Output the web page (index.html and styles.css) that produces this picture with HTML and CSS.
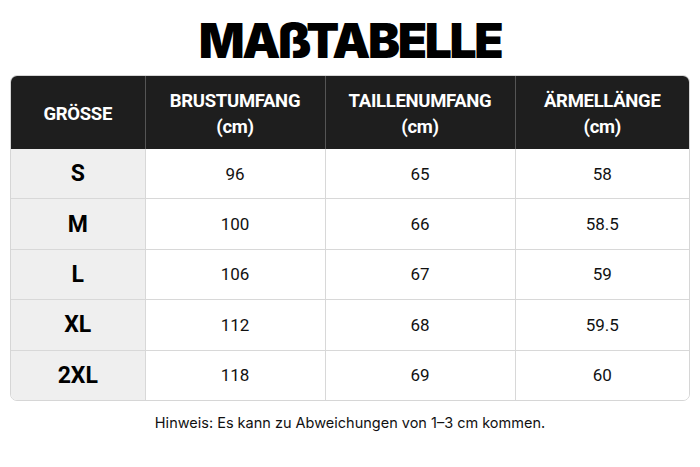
FILE: index.html
```html
<!DOCTYPE html>
<html lang="de">
<head>
<meta charset="utf-8">
<link rel="stylesheet" href="styles.css">
</head>
<body>
<main class="page">
  <h1 class="title">MAßTABELLE</h1>
  <div class="table-wrap">
    <table class="size-table">
      <thead>
        <tr>
          <th class="c1">GRÖSSE</th>
          <th class="c2">BRUSTUMFANG<br>(cm)</th>
          <th class="c3">TAILLENUMFANG<br>(cm)</th>
          <th class="c4">ÄRMELLÄNGE<br>(cm)</th>
        </tr>
      </thead>
      <tbody>
        <tr><td class="size">S</td><td>96</td><td>65</td><td>58</td></tr>
        <tr><td class="size">M</td><td>100</td><td>66</td><td>58.5</td></tr>
        <tr><td class="size">L</td><td>106</td><td>67</td><td>59</td></tr>
        <tr><td class="size">XL</td><td>112</td><td>68</td><td>59.5</td></tr>
        <tr><td class="size">2XL</td><td>118</td><td>69</td><td>60</td></tr>
      </tbody>
    </table>
  </div>
  <p class="note">Hinweis: Es kann zu Abweichungen von 1–3 cm kommen.</p>
</main>
</body>
</html>
```
FILE: styles.css
```css
html, body {
  margin: 0;
  padding: 0;
  background: #ffffff;
}
.page {
  width: 700px;
  height: 467px;
  display: flex;
  flex-direction: column;
  align-items: center;
}
.title {
  margin: 12px 0 0 0;
  height: 63px;
  font-family: Inter, "Noto Sans", sans-serif;
  font-weight: 900;
  font-size: 48px;
  line-height: 58px;
  letter-spacing: -2.4px;
  color: #000;
}
.table-wrap {
  width: 680px;
  border: 1px solid #d6d6d6;
  border-radius: 7px;
  overflow: hidden;
  box-sizing: border-box;
}
.size-table {
  width: 100%;
  border-collapse: collapse;
  table-layout: fixed;
  font-family: Roboto, "Liberation Sans", sans-serif;
}
.c1 { width: 134px; }
.c2 { width: 180px; }
.c3 { width: 190px; }
.size-table th {
  background: #1e1e1e;
  color: #fff;
  font-weight: 700;
  font-size: 18.5px;
  line-height: 26px;
  letter-spacing: -0.3px;
  height: 73px;
  padding: 3px 0 0 0;
  box-sizing: border-box;
  border-left: 1px solid #555;
}
.size-table th:first-child { border-left: none; }
.size-table td {
  height: 49.4px;
  padding: 0;
  text-align: center;
  font-size: 17px;
  color: #111;
  border-left: 1px solid #d8d8d8;
  border-top: 1px solid #d8d8d8;
  background: #fff;
}
.size-table tbody tr:first-child td { border-top: none; }
.size-table td.size {
  border-left: none;
  background: #efefef;
  font-weight: 700;
  font-size: 23px;
  color: #000;
}
.note {
  margin: 13px 0 0 0;
  font-family: Inter, "Noto Sans", sans-serif;
  font-size: 14.5px;
  color: #111;
}
```
